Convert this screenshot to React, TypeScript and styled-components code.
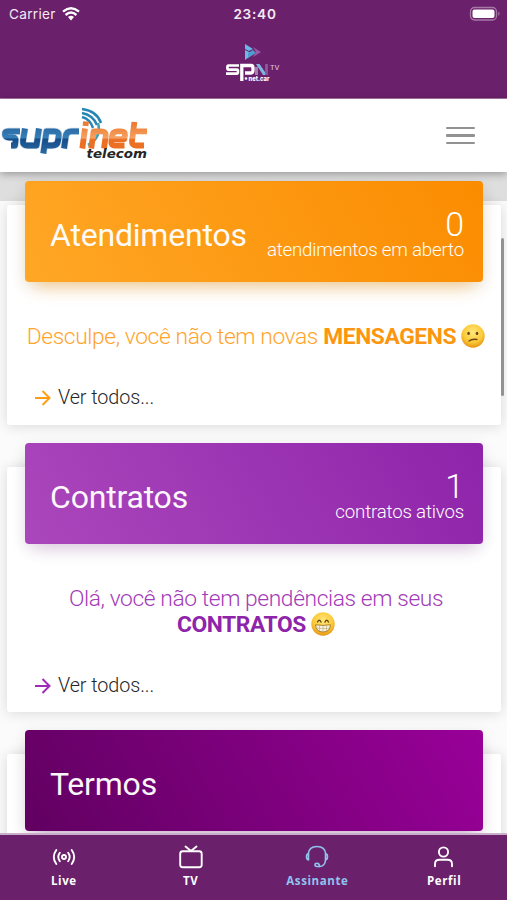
import React from "react";
import styled, { createGlobalStyle } from "styled-components";

const Global = createGlobalStyle`
  * { box-sizing: border-box; }
  body { margin: 0; background: #fff; font-family: Roboto, "Liberation Sans", sans-serif; }
`;

const Screen = styled.div`
  display: flex;
  flex-direction: column;
  width: 507px;
  height: 900px;
  overflow: hidden;
`;

const AppHeader = styled.header`
  flex: none;
  height: 99px;
  background: #6b206b;
  border-bottom: 1px solid #a776a7;
`;

const StatusBar = styled.div`
  display: grid;
  grid-template-columns: 1fr auto 1fr;
  align-items: center;
  height: 28px;
  padding: 0 6px 0 9px;
  color: #f4e9f4;
  font-family: Inter, sans-serif;
  font-size: 13.6px;
`;

const Carrier = styled.span`
  display: flex;
  align-items: center;
  gap: 6px;
  letter-spacing: 0.3px;
`;

const Clock = styled.span`
  font-size: 13.6px;
  font-weight: 600;
  letter-spacing: 0.75px;
`;

const Battery = styled.svg`
  justify-self: end;
`;

const LogoRow = styled.div`
  display: flex;
  justify-content: center;
  padding: 14px 1px 0 0;
`;

const SiteNav = styled.nav`
  position: relative;
  z-index: 2;
  flex: none;
  display: flex;
  align-items: center;
  justify-content: space-between;
  height: 73px;
  padding-right: 32px;
  background: #fff;
  box-shadow: 0 2px 8px rgba(0, 0, 0, 0.32);
`;

const MenuButton = styled.button`
  display: flex;
  flex-direction: column;
  gap: 5px;
  width: 29px;
  padding: 0;
  border: 0;
  background: none;
`;

const MenuLine = styled.span`
  height: 2.4px;
  border-radius: 1px;
  background: #929292;
`;

const Content = styled.main`
  position: relative;
  flex: 1;
  min-height: 0;
  overflow: hidden;
  padding: 33px 6px 0 7px;
  background: linear-gradient(#dedede 29px, #fbfbfb 29px);
`;

const Card = styled.section<{ $height: number }>`
  display: flex;
  flex-direction: column;
  height: ${(p) => p.$height}px;
  margin-bottom: 42px;
  padding: 0 18px;
  border-radius: 3px;
  background: #fff;
  box-shadow: 0 1px 14px rgba(0, 0, 0, 0.14);
`;

const Banner = styled.div<{ $from: string; $to: string; $glow: string }>`
  flex: none;
  display: flex;
  align-items: center;
  justify-content: space-between;
  height: 101px;
  margin-top: -24px;
  padding: 6px 19px 0 25px;
  border-radius: 4px;
  color: #fff;
  background: linear-gradient(60deg, ${(p) => p.$from}, ${(p) => p.$to});
  box-shadow: 0 12px 18px -9px ${(p) => p.$glow}, 0 4px 16px rgba(0, 0, 0, 0.1);
`;

const Title = styled.h2`
  margin: 0;
  font-size: 32px;
  font-weight: 400;
  line-height: 40px;
  letter-spacing: -0.2px;
  opacity: 0.96;
`;

const Summary = styled.div`
  display: flex;
  flex-direction: column;
  align-items: flex-end;
`;

const Count = styled.span`
  font-size: 34px;
  font-weight: 300;
  line-height: 31px;
`;

const Caption = styled.span`
  font-size: 18.7px;
  font-weight: 300;
  line-height: 20px;
  letter-spacing: -0.19px;
`;

const Message = styled.p<{ $color: string; $strong: string; $height: number }>`
  flex: none;
  height: ${(p) => p.$height}px;
  margin: 42px -12px 0 -8px;
  color: ${(p) => p.$color};
  font-size: 22.8px;
  font-weight: 300;
  line-height: 26px;
  letter-spacing: -0.4px;
  text-align: center;

  b {
    font-weight: 700;
    color: ${(p) => p.$strong};
  }
`;

const Face = styled.svg`
  width: 24px;
  height: 24px;
  vertical-align: -4px;
`;

const MoreLink = styled.a`
  display: flex;
  align-items: center;
  gap: 7px;
  margin: 37px 0 0 10px;
  color: #262626;
  font-size: 19.8px;
  font-weight: 350;
  line-height: 22px;
  letter-spacing: -0.08px;
`;

const ScrollThumb = styled.div`
  position: absolute;
  top: 66px;
  right: 3px;
  width: 3px;
  height: 158px;
  border-radius: 2px;
  background: #929292;
`;

const TabBar = styled.nav`
  position: relative;
  z-index: 2;
  flex: none;
  display: grid;
  grid-template-columns: repeat(4, 1fr);
  height: 67px;
  border-top: 2px solid #c9aec9;
  background: #6b206b;
`;

const Tab = styled.a<{ $active?: boolean }>`
  display: flex;
  flex-direction: column;
  align-items: center;
  padding: 9px 0 0 1px;
  color: ${(p) => (p.$active ? "#8fc4ee" : "#fff")};
  font-family: "Open Sans", "Noto Sans", sans-serif;
  font-size: 11.5px;
  font-weight: 700;
  line-height: 16px;
  letter-spacing: 0.6px;

  svg {
    margin-bottom: 3px;
  }
`;

const Stroke = ({ children, size = 26 }: { children: React.ReactNode; size?: number }) => (
  <svg width={size} height={size} viewBox="0 0 26 26" fill="none" stroke="currentColor" strokeWidth="1.9" strokeLinecap="round" strokeLinejoin="round">
    {children}
  </svg>
);

const WifiIcon = () => (
  <svg width="18" height="14" viewBox="0 0 18 14" fill="none" stroke="#fff" strokeWidth="2.4">
    <path d="M1 4.7Q9-2 17 4.7M3.6 8Q9 3.2 14.4 8" />
    <path d="M6 10Q9 7.5 12 10L9 13.5Z" fill="#fff" stroke="none" />
  </svg>
);

const SpnLogo = () => (
  <svg width="56" height="42" viewBox="0 0 56 42">
    <path d="M20 2L28 7L24 9L20 7Z" fill="#67b9e7" />
    <path d="M20 8L28 12L20 18Z" fill="#69bde5" />
    <path d="M23 11L28 8L31 11L23 16Z" fill="#519bce" />
    <path d="M28 5L36 10L28 15L31 10Z" fill="#9a5ba7" />
    <path d="M14 23.5H3.4Q2.4 23.5 2.4 25.4Q2.4 27.6 3.4 27.6H12Q13 27.6 13 29.6Q13 31.6 12 31.6H1" fill="none" stroke="#fff" strokeWidth="2.7" />
    <path d="M16.8 39V23.5H26Q28 23.5 28 26V28Q28 31 26 31H20" fill="none" stroke="#fff" strokeWidth="3.3" />
    <path d="M31.5 33V25" stroke="#a77cae" strokeWidth="3" />
    <path d="M31 22H34.5L42 33H38Z" fill="#7cb7df" />
    <path d="M41.5 22V33" stroke="#8d579c" strokeWidth="2.8" />
    <text x="45" y="28" fill="#d9bddd" fontFamily="Inter" fontSize="5.6" fontWeight="500" textLength="9.5" lengthAdjust="spacingAndGlyphs">TV</text>
    <circle cx="21" cy="36.5" r="1.3" fill="#fff" />
    <text x="23.5" y="38.5" fill="#fff" fontFamily="Inter" fontWeight="800" fontSize="7" textLength="21" lengthAdjust="spacingAndGlyphs">net.car</text>
  </svg>
);

const SuprinetLogo = () => (
  <svg width="152" height="62" viewBox="0 0 152 62">
    <defs>
      <linearGradient id="blue" gradientUnits="userSpaceOnUse" x1="0" y1="22" x2="0" y2="48">
        <stop offset="0" stopColor="#2a69a4" />
        <stop offset="0.42" stopColor="#367fb8" />
        <stop offset="0.46" stopColor="#154d88" />
        <stop offset="1" stopColor="#2b68a2" />
      </linearGradient>
      <linearGradient id="orange" gradientUnits="userSpaceOnUse" x1="0" y1="16" x2="0" y2="46">
        <stop offset="0" stopColor="#ec7429" />
        <stop offset="0.48" stopColor="#f39a58" />
        <stop offset="0.56" stopColor="#f4a168" />
        <stop offset="0.62" stopColor="#ec7023" />
      </linearGradient>
    </defs>
    <g fill="none" stroke="#2886b5" strokeWidth="2.4">
      <path d="M82 4Q97 6 101 18" />
      <path d="M82 8Q93 10 97 20" />
      <path d="M82 12Q90 14 93 23" />
      <path d="M98 18Q102 32 88 40" stroke="#4a9fae" strokeWidth="2.6" />
    </g>
    <g fill="none" stroke="#c3d5e6" strokeWidth="7" strokeLinejoin="round">
      <path d="M20 26.3H8Q4.5 26.3 5 29.5Q5.5 32.5 9 32.5H13Q16 32.5 15.5 36L15 40.5H11" />
      <path d="M25 23.5L23 35.5Q22.5 40.5 27 40.5H36.5L39 23.5" />
      <path d="M43.3 48.5L46.5 26.3H54Q59.5 26.3 58.7 31L58 36Q57.3 40.5 52 40.5H45.5" />
      <path d="M64 43.5L65.8 31Q66.5 26.3 71.5 26.3H79" />
    </g>
    <g fill="none" stroke="url(#blue)" strokeWidth="5.8" strokeLinejoin="round">
      <path d="M20 26.3H8Q4.5 26.3 5 29.5Q5.5 32.5 9 32.5H13Q16 32.5 15.5 36L15 40.5H11" />
      <path d="M25 23.5L23 35.5Q22.5 40.5 27 40.5H36.5L39 23.5" />
      <path d="M43.3 48.5L46.5 26.3H54Q59.5 26.3 58.7 31L58 36Q57.3 40.5 52 40.5H45.5" />
      <path d="M64 43.5L65.8 31Q66.5 26.3 71.5 26.3H79" />
    </g>
    <g fill="none" stroke="url(#orange)" strokeWidth="5.8" strokeLinejoin="round">
      <path d="M85 23.5L82.3 43.5M86 16.5L85.5 21" />
      <path d="M91.2 43.5L93.6 26.3H101Q106.5 26.3 105.7 31L104 43.5" />
      <path d="M112.5 34.2H124.3L125 30Q125.3 26.3 121 26.3H117.5Q112.8 26.3 112.2 30.5L111.3 36.5Q110.8 40.5 115 40.5H124.5" />
      <path d="M134.4 17L132 36Q131.7 40.5 136 40.5H144M134 26.3H147" />
    </g>
    <text x="86.5" y="53" fill="#252525" fontFamily="DejaVu Sans" fontSize="12" fontWeight="700" fontStyle="italic" textLength="60.5" lengthAdjust="spacingAndGlyphs">telecom</text>
  </svg>
);

const FaceBase = ({ id, children }: { id: string; children: React.ReactNode }) => (
  <Face viewBox="0 0 24 24">
    <defs>
      <radialGradient id={id} cx="50%" cy="35%" r="65%">
        <stop offset="0" stopColor="#ffe77b" />
        <stop offset="0.65" stopColor="#fbc938" />
        <stop offset="1" stopColor="#e69213" />
      </radialGradient>
    </defs>
    <circle cx="12" cy="12" r="11.7" fill={`url(#${id})`} />
    {children}
  </Face>
);

const ConfusedFace = () => (
  <FaceBase id="confused">
    <ellipse cx="7.6" cy="9.4" rx="1.3" ry="1.7" fill="#6b4612" />
    <ellipse cx="16" cy="9.4" rx="1.3" ry="1.7" fill="#6b4612" />
    <path d="M8 17Q11 14.6 16 15.5" fill="none" stroke="#704711" strokeWidth="1.3" strokeLinecap="round" />
  </FaceBase>
);

const GrinningFace = () => (
  <FaceBase id="grinning">
    <path d="M6.5 10Q8.3 6.5 10 10M14 10Q15.7 6.5 17.5 10" fill="none" stroke="#704711" strokeWidth="1.4" strokeLinecap="round" />
    <path d="M4.5 12.8Q12 14 19.5 12.8Q19 20 12 20Q5 20 4.5 12.8Z" fill="#f7f1df" stroke="#9a691b" strokeWidth="0.8" />
    <path d="M5 16Q12 17.4 19 16M8.5 13.5V19M12 13.6V20M15.5 13.5V19" fill="none" stroke="#b8a77e" strokeWidth="0.6" />
  </FaceBase>
);

const More = ({ color }: { color: string }) => (
  <MoreLink>
    <svg width="16" height="16" viewBox="0 0 16 16" fill="none" stroke={color} strokeWidth="2">
      <path d="M0 8H14M7.5 1L14.5 8L7.5 15" />
    </svg>
    Ver todos...
  </MoreLink>
);

export default function App() {
  return (
    <Screen>
      <Global />
      <AppHeader>
        <StatusBar>
          <Carrier>Carrier <WifiIcon /></Carrier>
          <Clock>23:40</Clock>
          <Battery width="32" height="16" viewBox="0 0 32 16">
            <rect x="1.5" y="1.5" width="26" height="12.5" rx="4" fill="none" stroke="#a678a6" strokeWidth="1.3" />
            <rect x="3.5" y="3.5" width="22" height="8.5" rx="2" fill="#fff" />
            <path d="M29.3 5.5Q32 7.7 29.3 10Z" fill="#a678a6" />
          </Battery>
        </StatusBar>
        <LogoRow><SpnLogo /></LogoRow>
      </AppHeader>
      <SiteNav>
        <SuprinetLogo />
        <MenuButton aria-label="Menu"><MenuLine /><MenuLine /><MenuLine /></MenuButton>
      </SiteNav>
      <Content>
        <Card $height={220}>
          <Banner $from="#ffa726" $to="#fb8c00" $glow="rgba(255, 152, 0, 0.45)">
            <Title>Atendimentos</Title>
            <Summary><Count>0</Count><Caption>atendimentos em aberto</Caption></Summary>
          </Banner>
          <Message $color="#ffa42b" $strong="#fb960e" $height={26}>
            Desculpe, você não tem novas <b>MENSAGENS</b> <ConfusedFace />
          </Message>
          <More color="#ff9e14" />
        </Card>
        <Card $height={245}>
          <Banner $from="#ab47bc" $to="#8e24aa" $glow="rgba(156, 39, 176, 0.2)">
            <Title>Contratos</Title>
            <Summary><Count>1</Count><Caption>contratos ativos</Caption></Summary>
          </Banner>
          <Message $color="#a33ab8" $strong="#8e24aa" $height={52}>
            Olá, você não tem pendências em seus<br /><b>CONTRATOS</b> <GrinningFace />
          </Message>
          <More color="#a22ab8" />
        </Card>
        <Card $height={220}>
          <Banner $from="#610061" $to="#990099" $glow="rgba(128, 0, 128, 0.3)">
            <Title>Termos</Title>
          </Banner>
        </Card>
        <ScrollThumb />
      </Content>
      <TabBar>
        <Tab>
          <Stroke>
            <circle cx="13" cy="13" r="2" />
            <path d="M8.8 8.8Q5.8 13 8.8 17.2M17.2 8.8Q20.2 13 17.2 17.2M5.3 6Q0.3 13 5.3 20M20.7 6Q25.7 13 20.7 20" />
          </Stroke>
          Live
        </Tab>
        <Tab>
          <Stroke>
            <rect x="2.2" y="7.2" width="21.5" height="16" rx="2.5" />
            <path d="M7.5 2.5L13 7L18.5 2.5" />
          </Stroke>
          TV
        </Tab>
        <Tab $active>
          <Stroke>
            <path d="M4.2 10Q5 2.5 13 2.5T21.8 10M4.5 9.5V16Q2.5 15.5 2.5 12.8Q2.5 10 4.5 9.5ZM21.5 9.5V16Q23.5 15.5 23.5 12.8Q23.5 10 21.5 9.5ZM21.5 16Q21 22.7 15 22.5" strokeWidth="1.6" />
            <path d="M15.5 22.5H13Q11 22.5 11 20.8Q11 19.2 13 19.2Q15.5 19.2 15.5 22.5" strokeWidth="1.6" />
          </Stroke>
          Assinante
        </Tab>
        <Tab>
          <Stroke>
            <circle cx="12.5" cy="8" r="4.6" />
            <path d="M4 22.3V20Q4 15.8 8.5 15.8H16.5Q21 15.8 21 20V22.3" />
          </Stroke>
          Perfil
        </Tab>
      </TabBar>
    </Screen>
  );
}
